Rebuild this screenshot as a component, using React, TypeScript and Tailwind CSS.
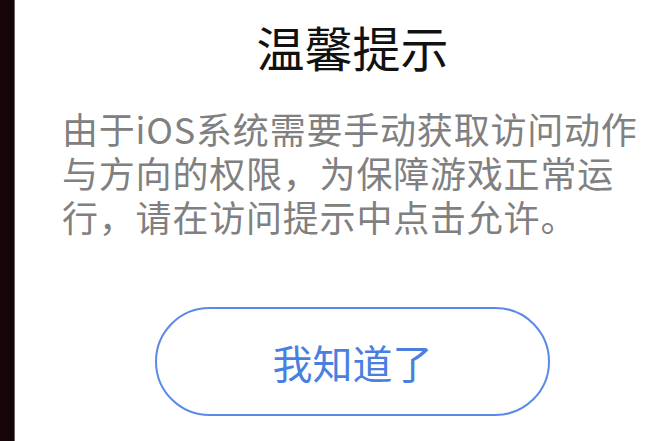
import React from "react";

export default function App() {
  const font = { fontFamily: '"Noto Sans CJK SC", "Noto Sans", sans-serif' };
  return (
    <div className="flex h-[441px] w-[668px] overflow-hidden bg-white" style={font}>
      <div className="h-full w-[15px] shrink-0 border-r border-[#6b6466] bg-[#150508]" />
      <div className="flex h-full w-[675px] shrink-0 flex-col items-center bg-white">
        <div className="mt-[14px] text-[48px] leading-[64px] text-[#111111]">温馨提示</div>
        <p className="mt-[28px] self-start pl-[47px] text-[36px] leading-[44px] tracking-[0.8px] text-[#808080]">
          由于iOS系统需要手动获取访问动作
          <br />
          与方向的权限，为保障游戏正常运
          <br />
          行，请在访问提示中点击允许。
        </p>
        <button className="mt-[69px] flex h-[109px] w-[395px] items-center justify-center rounded-full border-2 border-[#5b8ae6] bg-white text-[40px] leading-[48px] text-[#4a7fe0]">
          我知道了
        </button>
      </div>
    </div>
  );
}
